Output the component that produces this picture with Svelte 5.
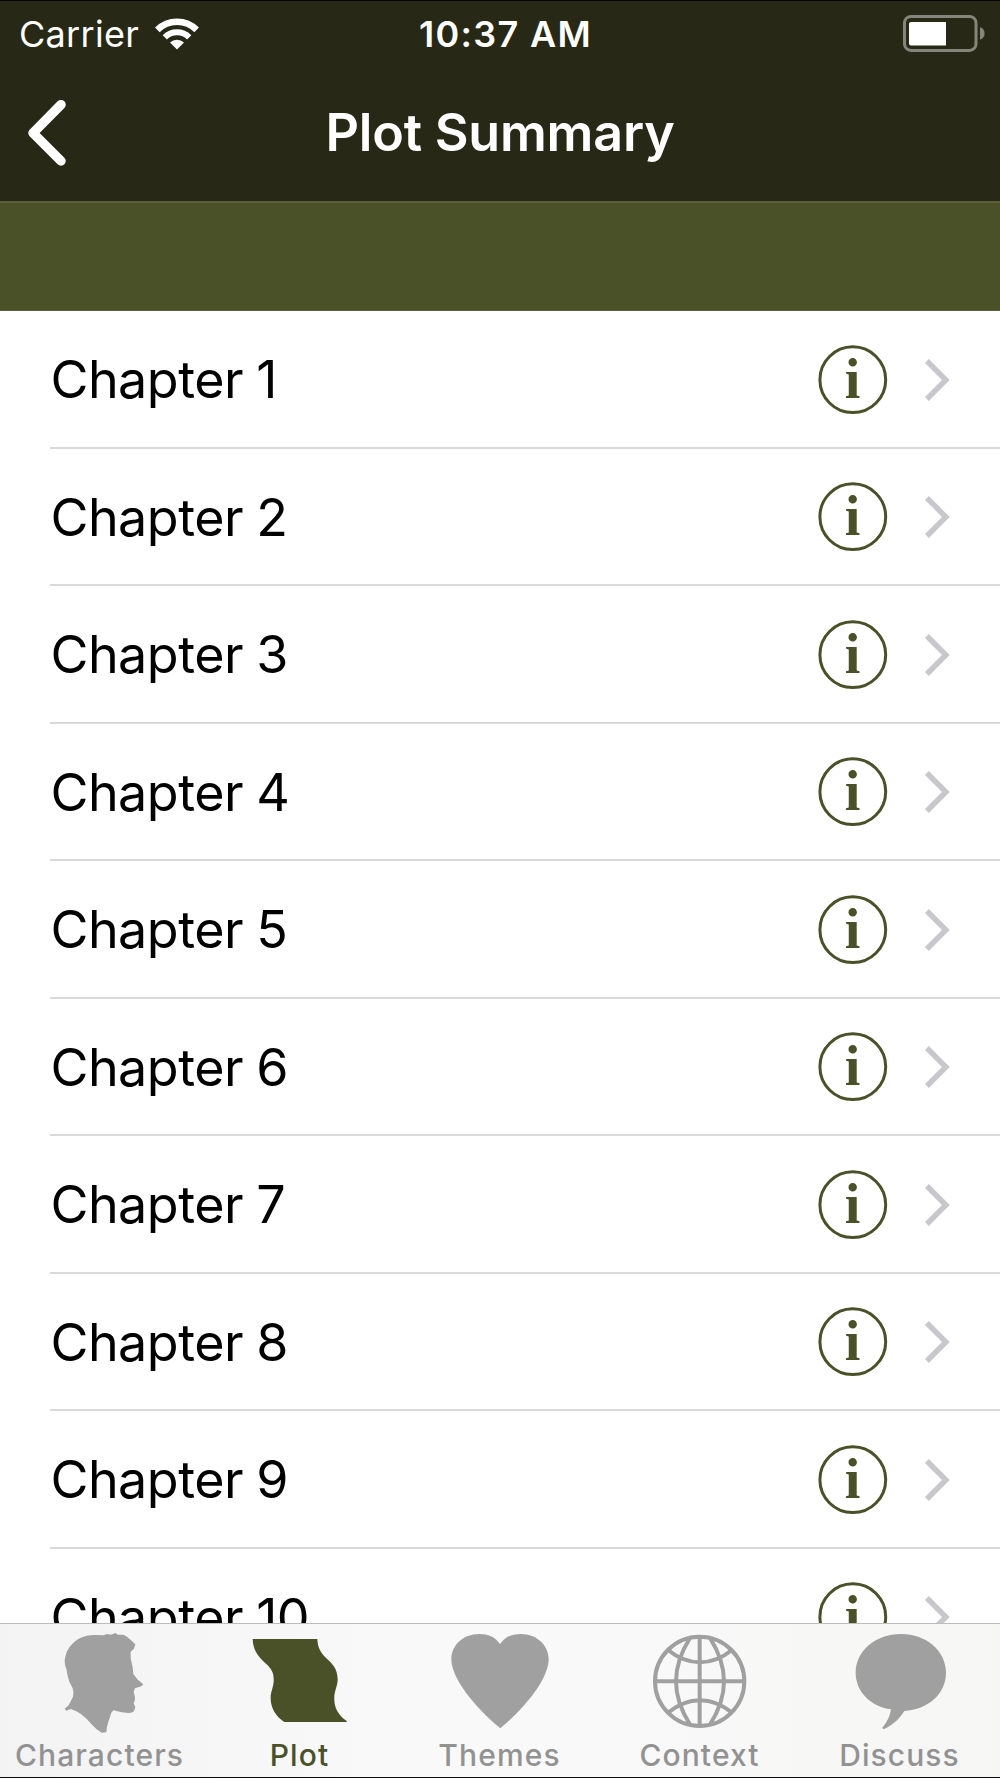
<script lang="ts">
  type Tab = { id: string; label: string; viewBox: string };

  const chapters = Array.from({ length: 10 }, (_, i) => `Chapter ${i + 1}`);

  const tabs: Tab[] = [
    { id: "characters", label: "Characters", viewBox: "120 132 360 300" },
    { id: "plot", label: "Plot", viewBox: "60 72 360 300" },
    { id: "themes", label: "Themes", viewBox: "60 72 360 300" },
    { id: "context", label: "Context", viewBox: "60 72 360 300" },
    { id: "discuss", label: "Discuss", viewBox: "120 192 360 300" },
  ];

  let active = $state("plot");
</script>

<div class="screen">
  <header>
    <div class="status">
      <div class="carrier">
        <span>Carrier</span>
        <svg class="wifi" width="46" height="34" viewBox="0 0 46 34">
          <path d="M3.35 12.85a27.8 27.8 0 0 1 39.3 0" stroke-width="6.6" />
          <path d="M10.8 20.3a17.2 17.2 0 0 1 24.4 0" stroke-width="6" />
          <path class="dot" d="M23 32.5l-7-7a10 10 0 0 1 14 0z" />
        </svg>
      </div>
      <div class="time">10:37 AM</div>
      <svg class="battery" width="84" height="38" viewBox="0 0 84 38">
        <rect class="shell" x="1.5" y="1.4" width="71.5" height="34" rx="6.5" />
        <path class="level" d="M8 7h35v23.5H8a2 2 0 0 1-2-2V9a2 2 0 0 1 2-2z" />
        <path class="cap" d="M77 12q4.6 2 4.6 6.4t-4.6 6.4z" />
      </svg>
    </div>
    <div class="nav">
      <button class="back" aria-label="Back">
        <svg width="48" height="70" viewBox="0 0 48 70">
          <path d="M41 6.7L13 35l28 28" />
        </svg>
      </button>
      <h1>Plot Summary</h1>
    </div>
  </header>

  <div class="banner"></div>

  <ul class="list">
    {#each chapters as chapter}
      <li>
        <span class="name">{chapter}</span>
        <svg class="info" width="70" height="70" viewBox="0 0 70 70">
          <circle cx="34.8" cy="34.7" r="32.9" />
          <text x="34.6" y="53" text-anchor="middle">i</text>
        </svg>
        <svg class="chevron" width="26" height="44" viewBox="0 0 26 44">
          <path d="M2.9 3l19 19-19 19" />
        </svg>
      </li>
    {/each}
  </ul>

  <nav class="tabs">
    {#each tabs as tab}
      <button class="tab" class:active={active === tab.id} onclick={() => (active = tab.id)}>
        <svg width="120" height="100" viewBox={tab.viewBox}>
          {#if tab.id === "characters"}
            <path
              d="M195 235Q198 215 208 202Q222 183 242 173Q260 164 285 165L310 166L322 162L332 164L347 159L353 164L370 164Q380 167 390 178L406 193L402 206L392 215L392 235L398 262L400 282L412 298L429 312Q430 317 420 320L405 325L401 335L405 352L404 363L401 370L406 382L402 394Q395 400 385 399L365 397L340 391Q334 396 331 408L325 425Q320 440 319 457L305 458Q290 450 276 434Q260 415 243 402Q228 391 212 387L199 392L194 386L206 376Q214 360 219 350Q222 335 218 325L208 305Q201 285 200 270Q192 250 195 235Z"
            />
          {:else if tab.id === "plot"}
            <path
              d="M98 117H292C293 140 300 157 319 175C340 193 352 208 353 238C353 260 341 275 343 300C344 328 358 348 380 363V366H193C168 349 153 326 152 296C151 274 162 262 161 238C161 216 153 204 133 187C112 167 99 148 98 117Z"
            />
          {:else if tab.id === "themes"}
            <path
              d="M240 132C224 110 205 102 178 102C128 102 94 137 94 178C94 232 158 316 241 385C324 316 386 232 386 178C386 137 352 102 302 102C275 102 256 110 240 132Z"
            />
          {:else if tab.id === "context"}
            <g class="globe">
              <circle cx="239" cy="244" r="134" />
              <path d="M239 108V380M104 244H376" />
              <path d="M210 114Q168 180 168 244T210 374M270 114Q312 180 312 244T270 374" />
              <path d="M144 150Q190 187 240 187T336 150M144 338Q190 301 240 301T336 338" />
            </g>
          {:else}
            <path
              d="M303 222C380 222 438 274 438 338C438 402 384 448 313 453C300 475 275 498 250 508L247 503C262 486 270 468 273 448C210 438 167 394 167 338C167 274 226 222 303 222Z"
            />
          {/if}
        </svg>
        <span>{tab.label}</span>
      </button>
    {/each}
  </nav>
</div>

<style>
  :global(body) {
    margin: 0;
    background: #fff;
  }

  .screen {
    display: flex;
    flex-direction: column;
    width: 1000px;
    height: 1778px;
    overflow: hidden;
    box-sizing: border-box;
    border-top: 1px solid #050505;
    border-bottom: 1px solid #0c0c0c;
    background: #fff;
    font-family: Inter, "Liberation Sans", sans-serif;
  }

  button {
    border: none;
    background: none;
    padding: 0;
    font: inherit;
    color: inherit;
    cursor: pointer;
  }

  svg {
    display: block;
    flex: none;
    overflow: visible;
  }

  header {
    flex: none;
    box-sizing: border-box;
    height: 202px;
    border-bottom: 2px solid #5b6039;
    background: #272815;
    color: #fff;
  }

  .status {
    display: grid;
    grid-template-columns: 1fr auto 1fr;
    align-items: center;
    height: 65px;
    margin-bottom: 2px;
    padding: 0 13px 0 19px;
    font-size: 36px;
    line-height: 44px;
  }

  .carrier {
    display: flex;
    align-items: center;
    gap: 15px;
    font-weight: 400;
    letter-spacing: 0.3px;
  }

  .wifi {
    fill: none;
    stroke: #fff;
  }

  .wifi .dot {
    fill: #fff;
    stroke: none;
  }

  .time {
    margin-right: -5px;
    font-weight: 560;
    letter-spacing: 1.3px;
  }

  .battery {
    justify-self: end;
  }

  .battery .shell {
    fill: none;
    stroke: #85867b;
    stroke-width: 3;
  }

  .battery .level {
    fill: #fff;
  }

  .battery .cap {
    fill: #85867b;
  }

  .nav {
    display: grid;
    grid-template-columns: 90px 1fr 90px;
    align-items: center;
    height: 130px;
  }

  .back svg {
    margin-left: 20px;
    fill: none;
    stroke: #fff;
    stroke-width: 9.5;
    stroke-linecap: round;
    stroke-linejoin: round;
  }

  h1 {
    margin: 0;
    text-align: center;
    font-size: 52px;
    line-height: 64px;
    font-weight: 600;
    letter-spacing: -0.2px;
  }

  .banner {
    flex: none;
    box-sizing: border-box;
    height: 108px;
    border-bottom: 1px solid #5b613b;
    background: #4a5128;
  }

  .list {
    flex: 1;
    min-height: 0;
    margin: 0;
    padding: 0;
    overflow: hidden;
    list-style: none;
  }

  li {
    display: flex;
    align-items: center;
    box-sizing: border-box;
    height: 137.5px;
    margin-left: 50px;
    padding-right: 50px;
    background: linear-gradient(#d9d9db, #d9d9db) bottom / 100% 2px no-repeat;
  }

  .name {
    flex: 1;
    padding: 1px 0 0 0.4px;
    font-size: 52px;
    line-height: 64px;
    letter-spacing: -0.5px;
    word-spacing: -1px;
    color: #000;
  }

  .info {
    margin-right: 36px;
  }

  .info circle {
    fill: none;
    stroke: #4a5028;
    stroke-width: 3;
  }

  .info text {
    fill: #4a5028;
    font: bold 56px "Liberation Serif", serif;
  }

  .chevron path {
    fill: none;
    stroke: #c7c7cc;
    stroke-width: 5.4;
  }

  .tabs {
    flex: none;
    display: grid;
    grid-template-columns: repeat(5, 1fr);
    box-sizing: border-box;
    height: 154px;
    border-top: 1px solid #bdbdbd;
    background: linear-gradient(90deg, #f3f3f3, #f9f9f9 40%, #f9f9f9 60%, #f6f6f5);
  }

  .tab {
    display: flex;
    flex-direction: column;
    align-items: center;
    color: #929292;
    fill: #a0a0a0;
  }

  .tab.active {
    color: #4a5028;
    fill: #4a5028;
  }

  .tab span {
    margin: 13px 1px 0 0;
    font-size: 30px;
    line-height: 36px;
    font-weight: 500;
    letter-spacing: 1.1px;
  }

  .globe {
    fill: none;
    stroke: #a0a0a0;
    stroke-width: 12;
  }
</style>
